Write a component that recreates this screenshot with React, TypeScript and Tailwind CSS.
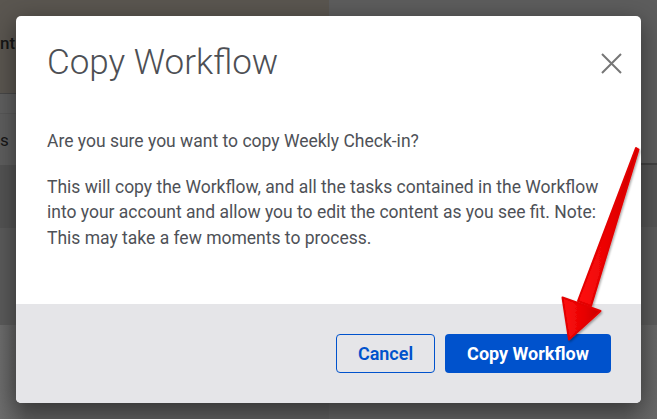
import React from "react";

function CloseIcon() {
  return (
    <svg width="21" height="21" viewBox="0 0 21 21" fill="none">
      <path d="M1 1L20 20M20 1L1 20" stroke="#767676" strokeWidth="2" />
    </svg>
  );
}

function Arrow() {
  return (
    <svg className="pointer-events-none absolute inset-0 h-full w-full" viewBox="0 0 657 419">
      <defs>
        <linearGradient id="arrowRed" x1="0" y1="0" x2="1" y2="0">
          <stop offset="0" stopColor="#ff1010" />
          <stop offset="0.6" stopColor="#e60000" />
          <stop offset="1" stopColor="#c80000" />
        </linearGradient>
        <filter id="arrowShadow" x="-20%" y="-20%" width="140%" height="140%">
          <feDropShadow dx="1" dy="1.5" stdDeviation="1.2" floodColor="#000" floodOpacity="0.35" />
        </filter>
      </defs>
      <g filter="url(#arrowShadow)" fill="url(#arrowRed)" stroke="#e40000" strokeLinejoin="round" strokeWidth="2">
        <polygon points="636,148 638.5,149.5 591,306 578,301" />
        <polygon points="562.5,297.5 600.5,311 569,339.5" />
      </g>
    </svg>
  );
}

export default function App() {
  return (
    <div className="relative h-[419px] w-[657px] overflow-hidden font-['Roboto',sans-serif]">
      {/* dimmed page behind the modal */}
      <div className="flex h-full w-full">
        <div className="flex w-[329px] flex-col bg-[#5e5e5e]">
          <div className="flex h-[93px] items-center overflow-hidden bg-[#5a5650] pb-[6px]">
            <span className="-ml-[45px] whitespace-nowrap text-[17px] font-medium text-[#161616]">Content</span>
          </div>
          <div className="h-px bg-[#474747]" />
          <div className="h-[19px] bg-[#5f5f5f]" />
          <div className="h-px bg-[#575757]" />
          <div className="flex h-[51px] items-center overflow-hidden pt-[2px]">
            <span className="-ml-[71px] whitespace-nowrap text-[17px] text-[#161616]">Workflows</span>
          </div>
          <div className="h-[63px] bg-[#535353]" />
          <div className="h-[97px] bg-[#5a5a5a]" />
          <div className="flex-1 bg-gradient-to-r from-[#6c6c6c] to-[#5a5a5a] to-[8%]" />
        </div>
        <div className="flex flex-1 flex-col">
          <div className="h-[163px] bg-[#5d5d5d]" />
          <div className="h-[2px] bg-[#424242]" />
          <div className="h-[62px] bg-[#555555]" />
          <div className="h-[98px] bg-[#5b5b5b]" />
          <div className="flex-1 bg-gradient-to-l from-[#676767] to-[#5e5e5e] to-[10%]" />
        </div>
      </div>

      {/* modal */}
      <div className="absolute left-[16px] top-[16px] flex h-[387px] w-[625px] flex-col overflow-hidden rounded-[5px] bg-white shadow-[0_6px_24px_rgba(0,0,0,0.45)]">
        <div className="flex items-center justify-between pl-[31px] pr-[19px] pt-[27px]">
          <h2 className="text-[35px] font-light leading-[40px] text-[#4d4f54]">Copy Workflow</h2>
          <button className="flex h-[21px] w-[21px] items-center justify-center">
            <CloseIcon />
          </button>
        </div>
        <div className="flex flex-1 flex-col gap-[20px] pl-[31px] pr-[28px] pt-[46px] text-[17.5px] leading-[25.6px] text-[#4e5157]">
          <p>Are you sure you want to copy Weekly Check-in?</p>
          <p>
            This will copy the Workflow, and all the tasks contained in the Workflow into your account and allow you
            to edit the content as you see fit. Note: This may take a few moments to process.
          </p>
        </div>
        <div className="flex h-[99px] items-center justify-end gap-[10px] bg-[#e5e5e8] pr-[30px]">
          <button className="flex h-[39px] w-[99px] items-center justify-center rounded-[4px] border border-[#0052cc] text-[18px] font-semibold text-[#0052cc]">
            Cancel
          </button>
          <button className="flex h-[39px] w-[166px] items-center justify-center rounded-[4px] bg-[#0052cc] text-[18px] font-bold text-white">
            Copy Workflow
          </button>
        </div>
      </div>

      <Arrow />
    </div>
  );
}
